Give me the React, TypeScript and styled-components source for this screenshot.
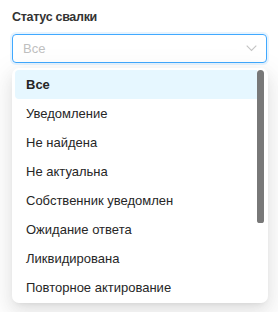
import React from "react";
import styled, { createGlobalStyle } from "styled-components";

const Global = createGlobalStyle`
  html, body { margin: 0; padding: 0; background: #fff; }
  body { font-family: "Liberation Sans", Arial, sans-serif; color: #262626; }
`;

const Field = styled.div`
  padding: 8px 11px 10px 12px;
  width: 255px;
  display: flex;
  flex-direction: column;
`;

const Label = styled.div`
  font-size: 12.5px;
  font-weight: 700;
  letter-spacing: -0.3px;
  line-height: 18px;
  color: #333;
  margin: 0 0 8px 0;
`;

const Trigger = styled.div`
  box-sizing: border-box;
  height: 29px;
  border: 1px solid #40a9ff;
  border-radius: 4px;
  box-shadow: 0 0 0 2px rgba(24, 144, 255, 0.1);
  display: flex;
  align-items: center;
  justify-content: space-between;
  padding: 0 9px 0 10px;
`;

const Placeholder = styled.span`
  font-size: 13px;
  color: #bfbfbf;
`;

const Dropdown = styled.div`
  margin-top: 5px;
  width: 256px;
  box-sizing: border-box;
  background: #fff;
  border-radius: 7px;
  padding: 2px 4px 1px 3px;
  display: flex;
  box-shadow: 0 3px 6px -4px rgba(0, 0, 0, 0.12), 0 6px 16px 0 rgba(0, 0, 0, 0.08),
    0 9px 28px 8px rgba(0, 0, 0, 0.05);
`;

const List = styled.div`
  flex: 1;
  height: 232px;
  overflow: hidden;
`;

const Track = styled.div`
  width: 7px;
  flex-shrink: 0;
`;

const Thumb = styled.div`
  height: 153px;
  background: #787878;
  border-radius: 4px 4px 3px 3px;
`;

const Option = styled.div<{ $active?: boolean }>`
  height: 29px;
  display: flex;
  align-items: center;
  padding: 0 11px;
  font-size: 13px;
  color: #262626;
  font-weight: ${(p) => (p.$active ? 700 : 400)};
  background: ${(p) => (p.$active ? "#e6f7ff" : "transparent")};
  border-radius: 4px 0 0 4px;
  white-space: nowrap;
`;

const options = [
  "Все",
  "Уведомление",
  "Не найдена",
  "Не актуальна",
  "Собственник уведомлен",
  "Ожидание ответа",
  "Ликвидирована",
  "Повторное актирование",
];

export default function App() {
  return (
    <>
      <Global />
      <Field>
        <Label>Статус свалки</Label>
        <Trigger>
          <Placeholder>Все</Placeholder>
          <svg width="11" height="7" viewBox="0 0 11 7" fill="none">
            <path d="M0.7 0.7 L5.5 5.5 L10.3 0.7" stroke="#c4c4c4" strokeWidth="1.1" />
          </svg>
        </Trigger>
        <Dropdown>
          <List>
            {options.map((o, i) => (
              <Option key={o} $active={i === 0}>
                {o}
              </Option>
            ))}
          </List>
          <Track>
            <Thumb />
          </Track>
        </Dropdown>
      </Field>
    </>
  );
}
